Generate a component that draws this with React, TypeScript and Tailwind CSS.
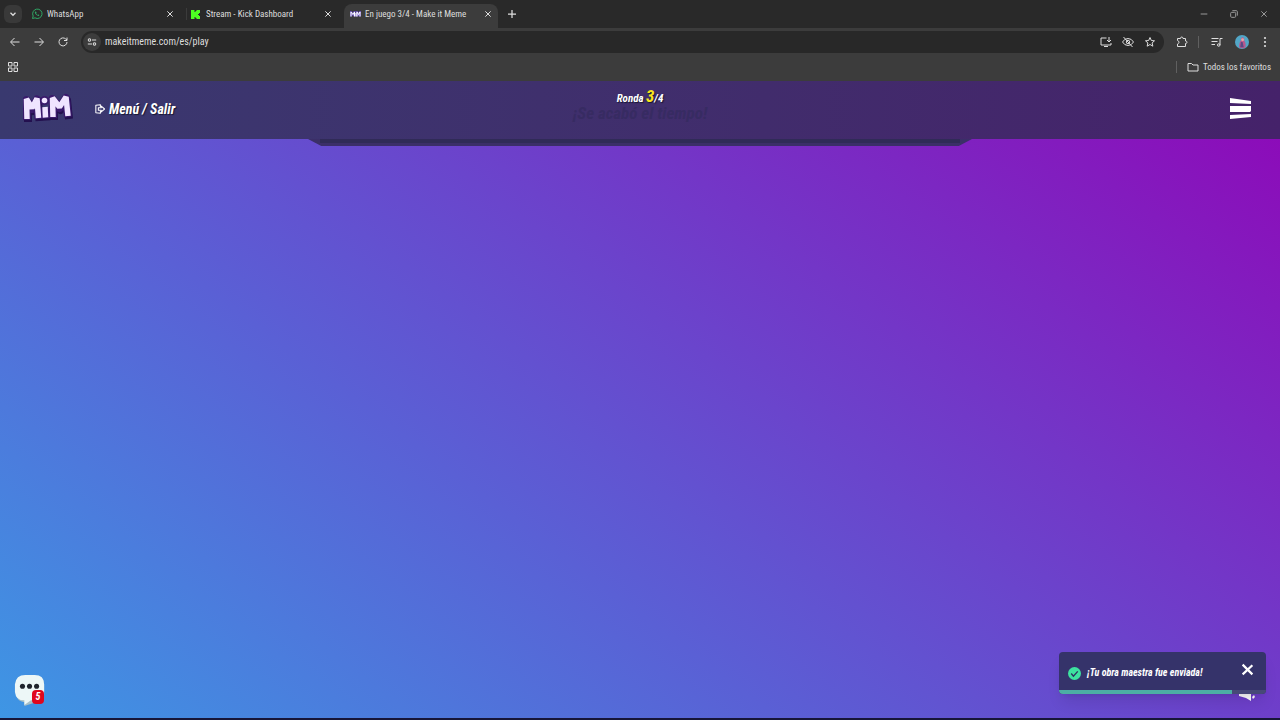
import type { ReactNode } from 'react';

type IconProps = { className?: string; children: ReactNode };

function Icon({ className = 'size-3', children }: IconProps) {
  return (
    <svg
      viewBox="0 0 24 24"
      className={`shrink-0 ${className}`}
      fill="none"
      stroke="currentColor"
      strokeWidth="2"
      aria-hidden="true"
    >
      {children}
    </svg>
  );
}

function CloseGlyph({ className = 'size-2' }: { className?: string }) {
  return (
    <Icon className={className}>
      <path d="M4 4l16 16M20 4L4 20" strokeWidth="3" />
    </Icon>
  );
}

function TabStrip() {
  return (
    <div className="flex h-7 items-center bg-[#292929] text-[9px] leading-3 text-[#dedede]">
      <button aria-label="Buscar pestañas" className="ml-1 flex size-[18px] items-center justify-center rounded-md bg-[#393939]">
        <Icon className="size-2.5"><path d="M6 9l6 6 6-6" strokeWidth="3" /></Icon>
      </button>
      <div className="ml-[9px] flex w-[155px] items-center pr-3">
        <Icon className="size-3 text-[#2fa866]">
          <path d="M3 21l1.4-5A9.4 9.4 0 1 1 8 19.7z" />
          <path d="M8.2 7.500c-1.4 1.4.2 4.100 2.300 6.100s4.700 3 5.700 1.700c.6-.8.300-1.300-.6-1.800-1.400-.8-1.500-.2-2.200.3-.9-.2-2.700-1.900-3-2.900.7-.7 1-1 .2-2.700-.4-1-1.400-1.400-2.400-.7z" fill="currentColor" stroke="none" />
        </Icon>
        <span className="ml-1 flex-1">WhatsApp</span>
        <button aria-label="Cerrar WhatsApp"><CloseGlyph /></button>
      </div>
      <div className="flex w-[158px] items-center border-l border-[#3b3b3b] pr-3 pl-1">
        <svg viewBox="0 0 18 18" className="size-[9px]" aria-hidden="true">
          <path fill="#4dff22" d="M0 0h7v4h2V2h2V0h7v6h-2v2h-2v2h2v2h2v6h-7v-2H9v-2H7v4H0z" />
        </svg>
        <span className="ml-1.5 flex-1">Stream - Kick Dashboard</span>
        <button aria-label="Cerrar Stream"><CloseGlyph /></button>
      </div>
      <div className="mt-1 flex h-6 w-[154px] items-center rounded-t-lg bg-[#3c3c3c] pr-1.5 pb-1 pl-1.5">
        <svg viewBox="0 0 22 12" className="h-1.5 w-[11px] shrink-0" aria-hidden="true">
          <path d="M2 11V2l4 5 3-5v9M12 4v7M14 11V2l3 5 3-5v9" fill="none" stroke="#6c55ba" strokeWidth="4" />
          <path d="M2 11V2l4 5 3-5v9M12 4v7M14 11V2l3 5 3-5v9" fill="none" stroke="#ffffff" strokeWidth="2" />
        </svg>
        <span className="ml-1 flex-1 whitespace-nowrap">En juego 3/4 - Make it Meme</span>
        <button aria-label="Cerrar Make it Meme"><CloseGlyph /></button>
      </div>
      <button aria-label="Nueva pestaña" className="ml-2">
        <Icon className="size-3"><path d="M12 4v16M4 12h16" strokeWidth="2.5" /></Icon>
      </button>
      <div className="mr-3 ml-auto flex items-center gap-[22px] text-[#999999]">
        <button aria-label="Minimizar"><Icon className="size-2"><path d="M2 12h20" strokeWidth="3" /></Icon></button>
        <button aria-label="Restaurar">
          <Icon className="size-2"><rect x="2" y="7" width="15" height="15" rx="3" strokeWidth="3" /><path d="M7 2h12q3 0 3 3v12" strokeWidth="3" /></Icon>
        </button>
        <button aria-label="Cerrar ventana"><CloseGlyph /></button>
      </div>
    </div>
  );
}

function Toolbar() {
  return (
    <div className="flex h-7 items-center bg-[#3c3c3c] pr-[9px] pl-[9px] text-[#dedede]">
      <div className="flex items-center gap-3">
        <button aria-label="Atrás"><Icon><path d="M21 12H4M11 4l-8 8 8 8" /></Icon></button>
        <button aria-label="Adelante"><Icon><path d="M3 12h17M13 4l8 8-8 8" /></Icon></button>
        <button aria-label="Recargar"><Icon><path d="M20 12a8 8 0 1 1-2.500-6L20 8M20 3v6h-6" /></Icon></button>
      </div>
      <div className="ml-3 flex h-[22px] flex-1 items-center rounded-full bg-[#282828] pr-2 pl-0.5">
        <button aria-label="Información del sitio" className="flex size-[18px] items-center justify-center rounded-full bg-[#3c3c3c]">
          <Icon className="size-2.5">
            <circle cx="6" cy="7" r="3" strokeWidth="2.5" />
            <path d="M12 7h10M2 17h10" strokeWidth="2.5" />
            <circle cx="18" cy="17" r="3" strokeWidth="2.5" />
          </Icon>
        </button>
        <input
          aria-label="Dirección"
          defaultValue="makeitmeme.com/es/play"
          className="ml-1 min-w-0 flex-1 bg-transparent text-[10px] leading-4 outline-none"
        />
        <div className="flex items-center gap-2.5">
          <button aria-label="Instalar aplicación">
            <Icon><path d="M13 4H2v14h20v-4M8 21h8M18 2v9M14 8l4 4 4-4" /></Icon>
          </button>
          <button aria-label="Cookies bloqueadas">
            <Icon>
              <path d="M1 12q4-7 11-7t11 7q-4 7-11 7T1 12zM3 2l18 20" /><circle cx="12" cy="12" r="3.5" />
            </Icon>
          </button>
          <button aria-label="Añadir a favoritos">
            <Icon><path d="M12 3l2.700 6 6.300.6-4.800 4.300 1.500 6.500L12 17l-5.700 3.400 1.500-6.500L3 9.600 9.300 9z" /></Icon>
          </button>
        </div>
      </div>
      <div className="ml-3 flex items-center">
        <button aria-label="Extensiones">
          <Icon className="size-3">
            <path d="M3 5h6q0-3 2.500-3T14 5h5v5q3 0 3 2.500T19 15v6H3v-5q3-1 3-3.500T3 9z" />
          </Icon>
        </button>
        <span className="ml-2.5 h-3 w-px bg-[#606060]" />
        <button aria-label="Control multimedia" className="ml-3">
          <Icon><path d="M1 5h14M1 11h12M1 17h7M18 18V5h5" /><circle cx="15.5" cy="18" r="2.5" /></Icon>
        </button>
        <button aria-label="Perfil" className="ml-3">
          <svg viewBox="0 0 24 24" className="size-3.5" aria-hidden="true">
            <circle cx="12" cy="12" r="12" fill="#52a6c7" />
            <path d="M7 21q0-8 3-11 0-6 3-6t3 6q3 4 2 11-5 4-11 0z" fill="#b9578d" />
            <path d="M10 12h3l2 9H9z" fill="#5a4a86" /><circle cx="13" cy="8" r="2.5" fill="#e7a4a4" />
          </svg>
        </button>
        <button aria-label="Más opciones" className="ml-2.5">
          <Icon><g fill="currentColor" stroke="none"><circle cx="12" cy="4" r="2.2" /><circle cx="12" cy="12" r="2.2" /><circle cx="12" cy="20" r="2.2" /></g></Icon>
        </button>
      </div>
    </div>
  );
}

function BookmarkBar() {
  return (
    <div className="flex h-[25px] items-center justify-between bg-[#3c3c3c] pr-[9px] pb-1 pl-[7px] text-[#dedede]">
      <button aria-label="Aplicaciones">
        <Icon className="size-3">
          <path d="M3 3h7v7H3zM14 3h7v7h-7zM3 14h7v7H3zM14 14h7v7h-7z" />
        </Icon>
      </button>
      <div className="flex items-center">
        <span className="mr-2.5 h-3 w-px bg-[#606060]" />
        <button className="flex items-center gap-1 text-[9px] leading-3">
          <Icon><path d="M2 5h7l3 3h10v12H2z" /></Icon>
          Todos los favoritos
        </button>
      </div>
    </div>
  );
}

function Logo() {
  const strokes = 'M4 27L3.500 7L9 16L14 6.500L15.500 26M22 15L22.500 25.500M30 25L29.500 6L36.500 15L43 5L45 24';
  return (
    <svg viewBox="0 0 50 34" className="h-[34px] w-[50px]" role="img" aria-label="MiM">
      <g fill="none" strokeLinejoin="round" strokeLinecap="butt">
        <path d={strokes} transform="translate(1 3)" stroke="#23104f" strokeWidth="8" />
        <path d={strokes} transform="translate(0 1)" stroke="#3a1a6c" strokeWidth="8" />
        <circle cx="21.5" cy="8.5" r="4.5" fill="#3a1a6c" />
      </g>
      <g fill="none" stroke="#efe4ff" strokeWidth="5.5" strokeLinejoin="bevel">
        <path d={strokes} />
        <circle cx="21.5" cy="8.5" r="2.8" fill="#efe4ff" stroke="none" />
      </g>
    </svg>
  );
}

function GameHeader() {
  return (
    <header className="relative flex h-[58px] items-center bg-linear-to-r from-[#39396f] to-[#45226a] pr-7 pb-0.5 pl-[23px] font-bold text-white italic">
      <a href="/es" className="flex"><Logo /></a>
      <button className="ml-[22px] flex items-center gap-1 text-[14px] leading-5 [text-shadow:1px_1px_1px_#171733]">
        <svg viewBox="0 0 24 24" className="size-2.5" fill="none" stroke="currentColor" strokeWidth="2.5" strokeLinejoin="round" aria-hidden="true">
          <path d="M13 7V2L2 3v18l11 1v-5" /><path d="M8 9h7V5l8 7-8 7v-4H8z" />
        </svg>
        Menú / Salir
      </button>
      <div className="absolute inset-x-0 top-[7px] text-center">
        <p className="text-[11px] leading-5 [text-shadow:1px_1px_1px_#171733]">
          Ronda <span className="text-[17px] leading-4 text-[#f8e51c]">3</span>/4
        </p>
        <p className="-mt-1 text-[17px] leading-4 text-[#372b62]">¡Se acabó el tiempo!</p>
      </div>
      <button aria-label="Abrir menú" className="ml-auto">
        <svg viewBox="0 0 22 22" className="size-[22px]" fill="#ffffff" aria-hidden="true">
          <path d="M0 0l21 3v3L0 5zM0 8h21v5l-1 1H0zM0 17l21-1v3L0 21z" />
        </svg>
      </button>
    </header>
  );
}

function Toast() {
  return (
    <div role="status" className="overflow-hidden rounded bg-[#35336a] shadow-lg">
      <div className="flex h-[38px] items-center pr-3 pl-[9px]">
        <svg viewBox="0 0 24 24" className="mt-1 size-[13px] shrink-0" aria-hidden="true">
          <circle cx="12" cy="12" r="12" fill="#3de2a0" />
          <path d="M6 12l4 5 8-9" fill="none" stroke="#2f3163" strokeWidth="2.5" />
        </svg>
        <p className="mt-1 ml-1.5 flex-1 text-[10px] leading-4 font-bold whitespace-nowrap text-white italic">¡Tu obra maestra fue enviada!</p>
        <button aria-label="Cerrar aviso" className="mb-1 text-white">
          <Icon className="size-[13px]"><path d="M3 3l18 18M21 4L3 21" strokeWidth="4" /></Icon>
        </button>
      </div>
      <div className="h-1 bg-[#474977]"><div className="h-1 w-5/6 bg-[#4caea4]" /></div>
    </div>
  );
}

export default function App() {
  return (
    <div className="flex min-h-screen flex-col bg-[#171638] font-['Roboto_Condensed','Lato',sans-serif]">
      <div>
        <TabStrip />
        <Toolbar />
        <BookmarkBar />
      </div>
      <GameHeader />
      <main className="relative mb-0.5 flex-1 bg-[linear-gradient(37deg,#3e96e4_0%,#5a60d5_38%,#8c0cb9_100%)]">
        <div className="mx-auto h-[7px] w-[664px] bg-[#3b2f68] [clip-path:polygon(0_0,100%_0,98%_100%,2%_100%)]">
          <div className="mx-auto h-1 w-[640px] bg-[#302b57]" />
        </div>
        <button aria-label="Chat, 5 mensajes nuevos" className="absolute bottom-3 left-3.5 size-8">
          <svg viewBox="0 0 32 34" className="size-full" aria-hidden="true">
            <path d="M1 10q1-8 9-8h13q8 1 8 9v11q-1 7-9 8l-3 1-9 3v-4q-8-1-9-9z" fill="#a9bfc6" />
            <path d="M0 11Q1 1 11 1h10q10 0 10 10v8q0 8-9 9h-5l-7 5v-5q-9 0-10-9z" fill="#edf7f7" />
            <g fill="#20242d"><circle cx="8" cy="13" r="2.7" /><circle cx="15.5" cy="13" r="2.7" /><circle cx="23" cy="13" r="2.7" /></g>
          </svg>
          <span className="absolute right-0.5 bottom-0.5 flex h-3.5 w-3 items-center justify-center rounded bg-[#e0061d] text-[10px] leading-3 font-bold text-white italic">5</span>
        </button>
        <button aria-label="Sonido" className="absolute right-6 bottom-[17px]">
          <svg viewBox="0 0 18 16" className="h-4 w-[18px]" fill="#ffffff" aria-hidden="true">
            <path d="M1 5h5l7-5v16l-5-3-7-2zM14 12l2-2 1 2-2 2z" />
          </svg>
        </button>
        <div className="absolute right-3.5 bottom-6 w-[207px]"><Toast /></div>
      </main>
    </div>
  );
}
